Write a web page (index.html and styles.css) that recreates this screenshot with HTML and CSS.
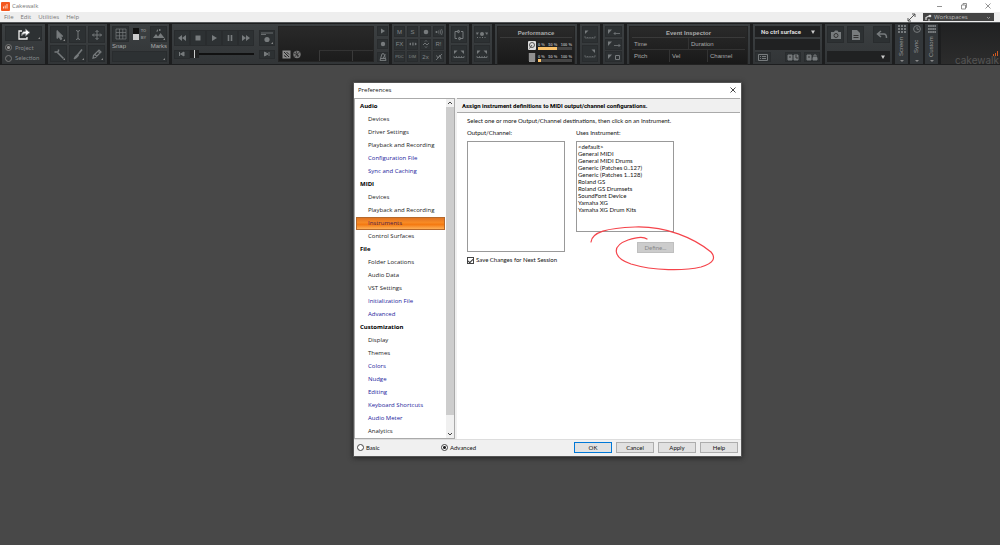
FILE: index.html
```html
<!DOCTYPE html>
<html lang="en">
<head>
<meta charset="utf-8">
<title>Cakewalk</title>
<link rel="stylesheet" href="styles.css">
</head>
<body>
<header class="titlebar">
  <svg class="app-icon" viewBox="0 0 9 9"><rect width="9" height="9" rx="1" fill="#f4581f"/><path d="M2.5 4.5v2M4.2 3.5v3M6 2v4.5" stroke="#ffd9c4" stroke-width="1"/></svg>
  <span class="app-name">Cakewalk</span>
  <div class="window-buttons">
    <button aria-label="Minimize"><svg viewBox="0 0 8 8"><path d="M1 4.500h5"/></svg></button>
    <button aria-label="Restore"><svg viewBox="0 0 8 8"><path d="M1.500 3h4v4h-4zM3 3V1.500h3.500v4H5.500"/></svg></button>
    <button aria-label="Close"><svg viewBox="0 0 8 8"><path d="M1.500 1.500l5 5M6.500 1.500l-5 5"/></svg></button>
  </div>
</header>
<nav class="menubar">
  <button>File</button><button>Edit</button><button>Utilities</button><button>Help</button>
  <svg class="expand" viewBox="0 0 9 9"><path d="M1 8l7-7M5 1h3v3M1 5v3h3" fill="none" stroke="#555"/></svg>
  <button class="workspaces"><svg viewBox="0 0 7 7"><path d="M1 6V3.500L4 2M3 6h2" stroke="#ddd" stroke-width="1.200" fill="none"/><circle cx="5" cy="2" r="1.300" fill="#ddd"/></svg><span>Workspaces</span><svg viewBox="0 0 7 7"><path d="M2 3l1.500 1.500L5 3" stroke="#aaa" fill="none" stroke-width=".8"/></svg></button>
</nav>

<section class="toolbar">
  <div class="module export">
    <button class="tool big corner" aria-label="Export"><svg viewBox="0 0 14 12"><path d="M5 3H2v8h8V9" fill="none" stroke="#eee" stroke-width="1.300"/><path d="M4.500 8C4.500 4.500 6 3.200 8.500 3.200V1l4.500 3.500L8.500 8V5.800C6.500 5.800 5.500 6.500 4.500 8z" fill="#fff"/></svg></button>
    <label><input type="radio" name="scope" checked>Project</label>
    <label><input type="radio" name="scope">Selection</label>
  </div>

  <div class="module tools">
    <button class="tool corner" aria-label="Smart tool"><svg viewBox="0 0 12 12"><path d="M4 1.500v8l2-1.800 1.500 3 1.400-.7-1.500-2.800h2.400z" fill="#777b7d"/></svg></button>
    <button class="tool" aria-label="Select tool"><svg viewBox="0 0 12 12"><path d="M4 1.500q2 0 2 1.500v6q0 1.500-2 1.500M8 1.500Q6 1.500 6 3M8 10.500Q6 10.500 6 9"/></svg></button>
    <button class="tool" aria-label="Move tool"><svg viewBox="0 0 12 12"><path d="M6 1.500v9M1.500 6h9M4.500 3L6 1.500 7.500 3M4.500 9L6 10.500 7.500 9M3 4.500L1.500 6 3 7.500M9 4.500L10.500 6 9 7.500"/></svg></button>
    <button class="tool corner" aria-label="Edit tool"><svg viewBox="0 0 12 12"><path d="M4.500 4.500l6 6" stroke-width="1.600"/><path d="M1.500 4h3l1-1V1.500" stroke-width="1.500"/></svg></button>
    <button class="tool corner" aria-label="Draw tool"><svg viewBox="0 0 12 12"><path d="M10 1.500L5.500 7" stroke-width="1.600"/><path d="M5.500 6.500L3.500 8 2 11l3-1.500 1.500-2z" fill="#777b7d"/></svg></button>
    <button class="tool corner" aria-label="Erase tool"><svg viewBox="0 0 12 12"><path d="M2.500 7.500L8 2l2 2-5.500 5.500-2.500.7zM7 3l2 2M4 6.500l2 2" stroke-width="1.200"/></svg></button>
  </div>

  <div class="module snap">
    <button class="tool" aria-label="Snap grid"><svg viewBox="0 0 12 12"><path d="M1 1h10v10H1zM1 4.500h10M1 7.800h10M4.500 1v10M7.800 1v10" stroke-width=".7"/></svg></button>
    <div class="toby"><span class="switch"></span><span class="toby-text">TO<br>BY</span></div>
    <button class="tool corner" aria-label="Marks"><svg viewBox="0 0 12 12"><path d="M0 10l3-4 2 2.500 2.500-3.500 4 5zM3 3.500L5 1v2.500zM6 1h1.500v2H6z" fill="#777b7d" stroke="none"/></svg></button>
    <span class="cap">Snap</span><span class="cap right">Marks</span>
    <button class="tool wide corner" aria-label="Snap value"></button>
  </div>

  <div class="module transport">
    <div class="deck">
      <div class="keys">
        <button class="tool" aria-label="Rewind"><svg viewBox="0 0 12 12"><path d="M6 3v6L2 6zM10 3v6L6 6z" fill="#777b7d" stroke="none"/></svg></button>
        <button class="tool" aria-label="Stop"><svg viewBox="0 0 12 12"><path d="M3.500 3.500h5v5h-5z" fill="#777b7d" stroke="none"/></svg></button>
        <button class="tool" aria-label="Play"><svg viewBox="0 0 12 12"><path d="M4 3v6l5-3z" fill="#777b7d" stroke="none"/></svg></button>
        <button class="tool" aria-label="Pause"><svg viewBox="0 0 12 12"><path d="M4.500 3v6M7.500 3v6" stroke-width="1.600"/></svg></button>
        <button class="tool" aria-label="Forward"><svg viewBox="0 0 12 12"><path d="M2 3v6l4-3zM6 3v6l4-3z" fill="#777b7d" stroke="none"/></svg></button>
      </div>
      <button class="tool record corner" aria-label="Record"><svg viewBox="0 0 12 12"><path d="M0 1h12M0 2.500h5" stroke-width=".8"/><circle cx="6" cy="7.500" r="2.600" fill="#777b7d" stroke="none"/></svg></button>
      <div class="seek">
        <button class="tool" aria-label="Go to start"><svg viewBox="0 0 8 6"><path d="M1.500 1v4" /><path d="M6 1v4L2.500 3z" fill="#777b7d"/></svg></button>
        <div class="track"><span class="thumb"></span></div>
      </div>
      <button class="tool end" aria-label="Go to end"><svg viewBox="0 0 8 6"><path d="M6 1v4"/><path d="M1.500 1v4L5 3z" fill="#777b7d"/></svg></button>
    </div>
    <div class="display">
      <svg viewBox="0 0 20 9"><rect x=".5" y=".5" width="8" height="8" fill="#8b8b8b"/><path d="M2 2l5 5M2 5.500L4.500 7M4.500 2L7 4.500" stroke="#222"/><circle cx="15" cy="4.500" r="3.700" fill="#777"/><path d="M11 8.500l8-8M12 3l5 3M14 1l2 6" stroke="#2a2a2a" stroke-width=".8"/></svg>
      <span></span><span></span>
    </div>
    <div class="side">
      <button class="tool" aria-label="Audition"><svg viewBox="0 0 8 8"><path d="M2 1.500v5l4-2.500z" fill="#777b7d" stroke="none"/></svg></button>
      <button class="tool" aria-label="Auto punch"><svg viewBox="0 0 8 8"><circle cx="4" cy="4" r="2.200" fill="#777b7d" stroke="none"/></svg></button>
      <button class="tool" aria-label="Metronome"><svg viewBox="0 0 8 8"><path d="M3 .8h2L7 7.400H1zM1.500 5.500h5M4 5l2.500-3.500" /></svg></button>
    </div>
  </div>

  <div class="module mix">
    <button class="tool">M</button><button class="tool">S</button>
    <button class="tool" aria-label="Arm"><svg viewBox="0 0 8 8"><circle cx="4" cy="4" r="2.300" fill="#777b7d" stroke="none"/></svg></button>
    <button class="tool" aria-label="Input echo"><svg viewBox="0 0 8 8"><circle cx="1.500" cy="4" r="1" fill="#777b7d" stroke="none"/><path d="M3.500 2.500q1 1.500 0 3M5 1.700q1.500 2.300 0 4.600M6.500 1q2 3 0 6" stroke-width=".7"/></svg></button>
    <button class="tool">FX</button>
    <button class="tool" aria-label="Offset"><svg viewBox="0 0 8 8"><path d="M0 4l2-1.500v3zM8 4L6 2.500v3z" fill="#777b7d" stroke="none"/><path d="M3.500 2.500v3M4.700 2.500v3" stroke-width=".7"/></svg></button>
    <button class="tool" aria-label="Automation"><svg viewBox="0 0 8 8"><path d="M1 5L3 3l2 2 2-2M3 1.500L4 .500l1 1M3 6.500l1 1 1-1" stroke-width=".9"/></svg></button>
    <button class="tool">R!</button>
    <button class="tool tiny">PDC</button><button class="tool tiny">DIM</button><button class="tool">2x</button>
    <button class="tool" aria-label="Bypass"><svg viewBox="0 0 8 8"><path d="M1 7l6-6M1.500 2.500L3 5l2-3 1 4" stroke-width=".9"/></svg></button>
  </div>

  <div class="module pair">
    <button class="tool" aria-label="Loop"><svg viewBox="0 0 12 12"><path d="M5 2.500H2v7h2M7 9.500h3v-7H8M5 1v3l2-1.500zM7 8v3L5 9.500z"/></svg></button>
    <button class="tool" aria-label="Set loop"><svg viewBox="0 0 12 12"><path d="M1 2.500h3.500L1 6zM11 2.500H7.500L11 6z" fill="#777b7d" stroke="none"/><path d="M1 8v1.500h10V8M3.500 8v1.500M6 8v1.500M8.500 8v1.500" stroke-width=".8"/></svg></button>
  </div>
  <div class="module pair">
    <button class="tool" aria-label="Punch"><svg viewBox="0 0 12 12"><path d="M0 3.500h3L1 6zM12 3.500H9L11 6z" fill="#777b7d" stroke="none"/><circle cx="6" cy="5" r="2" fill="#777b7d" stroke="none"/><path d="M1 8.500h10" stroke-dasharray="1 1.500"/></svg></button>
    <button class="tool" aria-label="Set punch"><svg viewBox="0 0 12 12"><path d="M1 2.500h3.500L1 6zM11 2.500H7.500L11 6z" fill="#777b7d" stroke="none"/><path d="M1 8v1.500h10V8M3.500 8v1.500M6 8v1.500M8.500 8v1.500" stroke-width=".8"/></svg></button>
  </div>

  <div class="module perf">
    <div class="screen">
      <h2>Performance</h2>
      <div class="meter"><svg viewBox="0 0 8 9"><rect width="8" height="9" rx="1" fill="#ddd"/><circle cx="4" cy="4" r="2.500" fill="none" stroke="#555"/><path d="M4 4L1.500 7.500" stroke="#555"/></svg><div><p><span>0 %</span><span>50 %</span><span>100 %</span></p><i class="bar"><b class="half"></b></i></div></div>
      <div class="meter"><svg viewBox="0 0 8 9"><rect x="1" width="6" height="9" fill="#999"/><path d="M0 1h8M0 3h8M0 5h8M0 7h8" stroke="#777" stroke-width=".5"/></svg><div><p><span>0 %</span><span>50 %</span><span>100 %</span></p><i class="bar"><b class="low"></b></i></div></div>
    </div>
  </div>

  <div class="module pair">
    <button class="tool" aria-label="Mark in"><svg viewBox="0 0 12 12"><path d="M1 1.500h3.500L1 5z" fill="#777b7d" stroke="none"/><path d="M1 7v2h10V7M3.500 8v1M6 8v1M8.500 8v1" stroke-width=".6"/></svg></button>
    <button class="tool" aria-label="Mark out"><svg viewBox="0 0 12 12"><path d="M11 1.500H7.500L11 5z" fill="#777b7d" stroke="none"/><path d="M1 7v2h10V7M3.500 8v1M6 8v1M8.500 8v1" stroke-width=".6"/></svg></button>
  </div>
  <div class="module triple">
    <button class="tool" aria-label="Previous marker"><svg viewBox="0 0 14 8"><path d="M1 1.500h4L1 6z" fill="#777b7d" stroke="none"/><path d="M13 5.500H7M8.500 4L7 5.500 8.500 7" stroke-width=".8"/></svg></button>
    <button class="tool" aria-label="Next marker"><svg viewBox="0 0 14 8"><path d="M1 1.500h4L1 6z" fill="#777b7d" stroke="none"/><path d="M7 5.500h6M11.500 4L13 5.500 11.500 7" stroke-width=".8"/></svg></button>
    <button class="tool" aria-label="Insert marker"><svg viewBox="0 0 14 8"><path d="M1 1.500h4L1 6z" fill="#777b7d" stroke="none"/><path d="M8.500 2.500h4v4h-4z"/></svg></button>
  </div>

  <div class="module inspector">
    <div class="screen">
      <h2>Event Inspector</h2>
      <div class="fields"><span>Time</span><span>Duration</span></div>
      <div class="fields"><span>Pitch</span><span>Vel</span><span>Channel</span></div>
    </div>
  </div>

  <div class="module surface">
    <button class="drop">No ctrl surface<svg viewBox="0 0 6 6"><path d="M1 1.500h4L3 5z" fill="#ccc"/></svg></button>
    <div class="slot"></div>
    <div class="trio">
      <button class="tool" aria-label="List"><svg viewBox="0 0 10 7"><path d="M.5.500h9v6h-9zM2 2.500h1M4 2.500h4M2 4.500h1M4 4.500h4"/></svg></button>
      <button class="tool" aria-label="ACT learn"><svg viewBox="0 0 12 7"><path d="M1 1h4v5H1zM7 1h4v5H7z" fill="#777b7d"/><path d="M2 3h2M9 1v3h2" stroke="#333"/></svg></button>
      <button class="tool" aria-label="ACT lock"><svg viewBox="0 0 12 7"><path d="M1 1h4v5H1zM7 3.500h4V6H7z" fill="#777b7d"/><path d="M2 3h2" stroke="#333"/><path d="M8 3.500V1h2v2.500"/></svg></button>
    </div>
  </div>

  <div class="module shots">
    <button class="tool" aria-label="Screenshot"><svg viewBox="0 0 12 12"><path d="M1 3h3l1-1.500h2.500l1 1.500H11v7H1z" fill="#777b7d" stroke="none"/><circle cx="6" cy="6.500" r="2" stroke="#333"/></svg></button>
    <button class="tool" aria-label="Notes"><svg viewBox="0 0 12 12"><path d="M2 1h5l3 3v7H2z" fill="#777b7d" stroke="none"/><path d="M3.500 6.500h5M3.500 8.500h5" stroke="#333"/></svg></button>
    <button class="tool undo" aria-label="Undo"><svg viewBox="0 0 12 12"><path d="M5 2L1.500 5 5 8M2 5h6q2.500 0 2.500 4" stroke-width="1.500"/></svg></button>
    <button class="drop" aria-label="Screenset"><svg viewBox="0 0 6 6"><path d="M1 1.500h4L3 5z" fill="#ccc"/></svg></button>
  </div>

  <div class="tabs">
    <button class="tab"><svg viewBox="0 0 8 8"><path d="M0 1h8M0 4h8M0 7h8" stroke-dasharray="2 1" stroke-width="2"/></svg><span>Screen</span><i></i></button>
    <button class="tab"><svg viewBox="0 0 8 8"><circle cx="4" cy="4" r="3.400"/><path d="M4 2v2.300h2"/></svg><span>Sync</span><i></i></button>
    <button class="tab"><svg viewBox="0 0 8 8"><path d="M0 1h8M0 4h8M0 7h8" stroke-dasharray="1.800 .3" stroke-width="2"/></svg><span>Custom</span><i></i></button>
  </div>
  <div class="brand"><svg viewBox="0 0 5 5"><path d="M.5 3v2M2.500 2v3M4.500 0v5" stroke="#d05a22"/></svg><span>cakewalk</span></div>
</section>

<main class="desktop">
  <section class="dialog" role="dialog" aria-label="Preferences">
    <div class="dialog-title"><span>Preferences</span><button aria-label="Close dialog"><svg viewBox="0 0 8 8"><path d="M1.500 1.500l5 5M6.500 1.500l-5 5" stroke="#333" stroke-width=".9"/></svg></button></div>
    <div class="dialog-body">
      <div class="side-panel">
        <ul class="tree">
          <li class="group">Audio</li><li>Devices</li><li>Driver Settings</li><li>Playback and Recording</li><li class="adv">Configuration File</li><li class="adv">Sync and Caching</li>
          <li class="group">MIDI</li><li>Devices</li><li>Playback and Recording</li><li class="selected">Instruments</li><li>Control Surfaces</li>
          <li class="group">File</li><li>Folder Locations</li><li>Audio Data</li><li>VST Settings</li><li class="adv">Initialization File</li><li class="adv">Advanced</li>
          <li class="group">Customization</li><li>Display</li><li>Themes</li><li class="adv">Colors</li><li class="adv">Nudge</li><li class="adv">Editing</li><li class="adv">Keyboard Shortcuts</li><li class="adv">Audio Meter</li><li>Analytics</li>
        </ul>
        <div class="scrollbar"><svg viewBox="0 0 8 8"><path d="M2 5l2-2 2 2"/></svg><span></span><svg viewBox="0 0 8 8"><path d="M2 3l2 2 2-2"/></svg></div>
      </div>
      <div class="pane">
        <h1>Assign instrument definitions to MIDI output/channel configurations.</h1>
        <div class="form">
          <p class="hint">Select one or more Output/Channel destinations, then click on an Instrument.</p>
          <div class="lists">
            <div class="col">
              <label for="out">Output/Channel:</label>
              <select id="out" class="tall" size="10"></select>
              <label class="save"><input type="checkbox" checked>Save Changes for Next Session</label>
            </div>
            <div class="col">
              <label for="inst">Uses Instrument:</label>
              <select id="inst" size="12"><option>&lt;default&gt;</option><option>General MIDI</option><option>General MIDI Drums</option><option>Generic (Patches 0..127)</option><option>Generic (Patches 1..128)</option><option>Roland GS</option><option>Roland GS Drumsets</option><option>SoundFont Device</option><option>Yamaha XG</option><option>Yamaha XG Drum Kits</option></select>
              <button class="define" disabled>Define...</button>
            </div>
          </div>
        </div>
      </div>
    </div>
    <div class="dialog-footer">
      <label><input type="radio" name="mode">Basic</label>
      <label><input type="radio" name="mode" checked>Advanced</label>
      <div class="actions"><button class="primary">OK</button><button>Cancel</button><button>Apply</button><button>Help</button></div>
    </div>
    <svg class="mark" viewBox="0 0 126 48"><path d="M2 18C3 8 18 4 46 3C77 2 105 14 122 28C127 34 125 39 112 43C95 47 65 47 42 40C24 34 22 22 39 16C48 13 54 12 58 15"/></svg>
  </section>
</main>
</body>
</html>
```

FILE: styles.css
```css
* { box-sizing: border-box; }
body { margin: 0; min-height: 100vh; display: flex; flex-direction: column; background: #484848; font: 6px/8px "Open Sans", sans-serif; color: #111; }
button { font: inherit; color: inherit; border: 0; padding: 0; background: none; }
h1, h2, p, ul { margin: 0; padding: 0; }
svg { display: block; flex: none; }
input { appearance: none; margin: 0; flex: none; }

.titlebar { display: flex; align-items: center; height: 12px; padding: 0 8px 0 1px; background: #fff; color: #777; }
.app-icon { width: 9px; height: 9px; }
.app-name { margin-left: 2px; }
.window-buttons { display: flex; gap: 16px; margin-left: auto; }
.window-buttons svg { width: 8px; height: 8px; fill: none; stroke: #777; stroke-width: .8; }

.menubar { display: flex; align-items: center; height: 10px; padding: 0 6px 0 4px; gap: 7px; background: #eee; color: #777; }
.menubar .expand { width: 9px; height: 9px; margin-left: auto; }
.workspaces { display: flex; align-items: center; width: 71px; height: 8px; padding: 0 2px; gap: 2px; background: #444; color: #bbb; }
.workspaces svg { width: 7px; height: 7px; }
.workspaces span { flex: 1; text-align: left; }

.toolbar { display: flex; gap: 3px; height: 43px; padding: 1px 0 1px 2px; background: #1d1e1f; border-top: 1px solid #55585a; color: #84888a; font-family: "Liberation Sans", sans-serif; }
.module { flex: none; display: grid; padding: 2px; background: linear-gradient(#3c4042, #323537); align-content: space-between; }
.tool { position: relative; display: flex; align-items: center; justify-content: center; background: #2d3133; border: 1px solid #292c2e; }
.tool svg { fill: none; stroke: #777b7d; }
.corner::after { content: ""; position: absolute; right: 1px; bottom: 1px; border: 1px solid #888; border-top-color: transparent; border-left-color: transparent; }

.export { width: 43px; padding: 2px 3px; }
.big { height: 15px; }
.big svg { width: 14px; height: 12px; }
.export label { display: flex; align-items: center; gap: 3px; font-family: Lato, sans-serif; }
.export input { width: 7px; height: 7px; border: 1px solid #777; border-radius: 50%; }
.export input:checked { background: radial-gradient(circle, #999 1px, #333 2px); }

.tools { width: 59px; grid-template-columns: repeat(3, 1fr); column-gap: 2px; }
.tools .tool { height: 17px; }
.tools svg, .pair svg, .snap svg, .keys svg, .shots .tool svg { width: 12px; height: 12px; }

.snap { width: 59px; grid-template-columns: 17px 1fr 17px; }
.snap .tool { height: 16px; }
.toby { display: flex; align-items: center; justify-content: center; gap: 2px; font-size: 4px; line-height: 7px; font-weight: bold; }
.switch { width: 6px; height: 12px; background: linear-gradient(#111 50%, #ccc 50%); }
.cap { line-height: 7px; color: #aaa; }
.cap.right { grid-column: 2 / 4; text-align: right; }
.snap .wide { grid-column: 1 / 4; height: 11px; }

.transport { width: 217px; grid-template-columns: 101px 96px 11px; column-gap: 3px; align-content: stretch; }
.deck { display: grid; grid-template-columns: 80px 16px; justify-content: space-between; align-content: center; gap: 4px; }
.keys { display: flex; }
.keys .tool { flex: 1; height: 16px; }
.record svg { width: 12px; height: 12px; }
.seek { display: flex; align-items: center; }
.seek .tool { width: 16px; height: 9px; }
.seek svg, .end svg { width: 8px; height: 6px; }
.track { flex: 1; height: 2px; background: #111; display: flex; align-items: center; }
.thumb { width: 9px; height: 8px; background: linear-gradient(90deg, #222 4px, #ccc 4px, #ccc 5px, #222 5px); }
.display { display: grid; grid-template-columns: 40px 33px 1fr; align-self: stretch; align-items: end; background: linear-gradient(#292929, #1c1c1c); border: 1px solid #242424; }
.display svg { width: 20px; height: 9px; margin: 0 0 2px 3px; }
.display span { height: 11px; border-left: 1px solid #3a3a3a; border-top: 1px solid #333; }
.side { display: flex; flex-direction: column; justify-content: space-between; }
.side .tool { height: 10px; }
.side svg, .mix svg { width: 8px; height: 8px; }

.mix { width: 54px; grid-template-columns: repeat(4, 1fr); column-gap: 2px; }
.mix .tool { height: 11px; line-height: 8px; }
.mix .tiny { font-size: 4px; }

.pair { width: 20px; }
.pair .tool { height: 17px; }
.triple { width: 21px; }
.triple .tool { height: 11px; }
.triple svg { width: 14px; height: 8px; }

.screen { background: linear-gradient(#2a2a2a, #191919); border: 1px solid #222; padding: 2px; }
.screen h2 { font-size: 6px; line-height: 8px; text-align: center; color: #aaa; border-bottom: 1px solid #3a3a3a; }
.perf { width: 82px; align-content: stretch; }
.meter { display: flex; justify-content: flex-end; gap: 2px; height: 12px; align-items: end; }
.meter svg { width: 8px; height: 9px; }
.meter div { width: 34px; }
.meter p { display: flex; justify-content: space-between; font-size: 4px; line-height: 5px; font-weight: bold; color: #aaa; }
.bar { display: block; height: 3px; background: #444; }
.bar b { display: block; height: 3px; background: #fcc36b; }
.bar .half { width: 55%; }
.bar .low { width: 8%; }

.inspector { width: 123px; align-content: stretch; }
.fields { display: flex; height: 12px; color: #aaa; line-height: 12px; border-bottom: 1px solid #333; }
.fields:last-child { border: 0; }
.fields span { flex: 1; padding-left: 2px; }
.fields span + span { border-left: 1px solid #333; }

.surface { width: 69px; }
.drop { display: flex; align-items: center; justify-content: space-between; height: 11px; padding: 0 4px 0 6px; background: #202122; color: #ddd; font: bold 6px/8px Roboto, sans-serif; }
.drop svg { width: 6px; height: 6px; margin-left: auto; }
.slot { height: 11px; background: #202122; }
.trio { display: flex; gap: 3px; }
.trio .tool { width: 16px; height: 10px; }
.trio .tool:first-child { margin-right: auto; }
.trio svg { width: 12px; height: 7px; }

.shots { width: 67px; grid-template-columns: 17px 17px 1fr; column-gap: 3px; }
.shots .tool { height: 17px; }
.shots .undo { width: 17px; justify-self: end; }
.shots .drop { grid-column: 1 / 4; }

.tabs { flex: none; display: flex; gap: 2px; }
.tab { width: 13px; display: flex; flex-direction: column; align-items: center; gap: 2px; padding: 1px 0 2px; background: #33373a; }
.tab svg { width: 8px; height: 8px; fill: none; stroke: #777b7d; }
.tab span { flex: 1; writing-mode: vertical-rl; transform: rotate(180deg); font-size: 6px; line-height: 9px; text-align: center; color: #999; }
.tab i { border: 2px solid transparent; border-top-color: #888; border-bottom: 0; }
.brand { flex: 1; display: flex; flex-direction: column; align-items: flex-end; justify-content: flex-end; padding: 0 1px 0 0; background: linear-gradient(#202122, #2c2c2c); font: 10px/8px Inter, sans-serif; color: #555; }
.brand svg { width: 5px; height: 5px; margin-right: 1px; }

.desktop { flex: 1; position: relative; }
.dialog { position: absolute; left: 353px; top: 17px; width: 389px; display: flex; flex-direction: column; background: #fff; border: 1px solid #555; box-shadow: 0 1px 5px #222; }
.dialog-title { display: flex; align-items: center; justify-content: space-between; height: 15px; padding: 0 4px 2px; }
.dialog-title svg { width: 8px; height: 8px; }
.dialog-body { display: flex; gap: 2px; background: #f0f0f0; border-bottom: 1px solid #ddd; padding-right: 1px; }
.side-panel { width: 101px; display: flex; background: #fff; border: 1px solid #aaa; }
.tree { flex: 1; list-style: none; padding: 1px 1px 0; }
.tree li { height: 13px; line-height: 12px; padding-left: 12px; color: #222; white-space: nowrap; }
.tree .group { padding-left: 4px; font-weight: bold; color: #000; }
.tree .adv { color: #1c1c9c; }
.tree .selected { background: linear-gradient(#e07424, #f78a25 40%, #f47a12 60%, #ffb057); border: 1px solid #b5692c; line-height: 10px; padding-left: 11px; color: #4a2050; }
.scrollbar { width: 8px; display: flex; flex-direction: column; background: #f0f0f0; }
.scrollbar svg { width: 8px; height: 8px; fill: none; stroke: #444; }
.scrollbar span { height: 308px; background: #cdcdcd; }
.scrollbar span + svg { margin-top: auto; }
.pane { flex: 1; background: #fff; border-top: 1px solid #aaa; }
.pane h1 { height: 14px; font: bold 6px/13px Roboto, sans-serif; padding-left: 5px; background: #f0f0f0; border-bottom: 1px solid #aaa; color: #000; }
.form { padding: 4px 10px; font-family: Lato, sans-serif; }
.hint { line-height: 8px; margin-bottom: 4px; white-space: nowrap; }
.lists { display: flex; gap: 11px; }
.col { width: 98px; display: flex; flex-direction: column; }
.col label { line-height: 8px; margin-bottom: 4px; }
select { height: 91px; padding: 1px 0; margin: 0; border: 1px solid #999; border-radius: 0; background: #fff; color: #111; font: 6px/7px Lato, sans-serif; overflow: hidden; outline: 0; }
option { padding: 0 1px; min-height: 7px; line-height: 7px; }
.tall { height: 111px; }
.col .save { display: flex; align-items: center; gap: 2px; margin-top: 4px; white-space: nowrap; }
.save input { display: flex; justify-content: center; width: 7px; height: 7px; border: 1px solid #444; }
.save input::after { content: ""; width: 2px; height: 4px; border: solid #333; border-width: 0 1px 1px 0; transform: rotate(45deg); }
.define { align-self: flex-end; width: 37px; height: 11px; margin-top: 10px; background: #ccc; border: 1px solid #bfbfbf; color: #888; line-height: 8px; }

.dialog-footer { display: flex; align-items: center; height: 16px; padding: 0 3px 1px; background: #f0f0f0; font-family: Lato, sans-serif; }
.dialog-footer label { display: flex; align-items: center; gap: 2px; width: 84px; }
.dialog-footer input { width: 7px; height: 7px; border: 1px solid #444; border-radius: 50%; background: #fff; }
.dialog-footer input:checked { background: radial-gradient(circle, #222 1px, #fff 2px); }
.actions { display: flex; gap: 4px; margin-left: auto; }
.actions button { width: 38px; height: 11px; background: #e1e1e1; border: 1px solid #adadad; line-height: 8px; }
.actions .primary { border-color: #0078d7; }
.mark { position: absolute; left: 235px; top: 141px; width: 126px; height: 48px; fill: none; stroke: #f5444b; stroke-width: 1.2; stroke-linecap: round; pointer-events: none; }
```
